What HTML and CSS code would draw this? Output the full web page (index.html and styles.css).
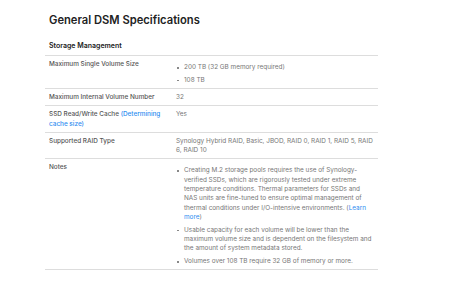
FILE: index.html
```html
<!DOCTYPE html>
<html lang="en">
<head>
  <meta charset="UTF-8" />
  <meta name="viewport" content="width=device-width, initial-scale=1.0" />
  <title>General DSM Specifications</title>
  <link rel="stylesheet" href="styles.css">
</head>
<body>

  <div class="specs">
    <h1>General DSM Specifications</h1>

    <h2>Storage Management</h2>

    <div class="row">
      <div class="label">Maximum Single Volume Size</div>
      <div class="value">
        <ul>
          <li>200 TB (32 GB memory required)</li>
          <li>108 TB</li>
        </ul>
      </div>
    </div>

    <div class="row">
      <div class="label">Maximum Internal Volume Number</div>
      <div class="value">32</div>
    </div>

    <div class="row">
      <div class="label">SSD Read/Write Cache <a href="#">(Determining cache size)</a></div>
      <div class="value">Yes</div>
    </div>

    <div class="row">
      <div class="label">Supported RAID Type</div>
      <div class="value raid">Synology Hybrid RAID, Basic, JBOD, RAID 0, RAID 1, RAID 5, RAID 6, RAID 10</div>
    </div>

    <div class="row">
      <div class="label">Notes</div>
      <div class="value">
        <ul>
          <li>Creating M.2 storage pools requires the use of Synology-verified SSDs, which are rigorously tested under extreme temperature conditions. Thermal parameters for SSDs and NAS units are fine-tuned to ensure optimal management of thermal conditions under I/O-intensive environments. (<a href="#">Learn more</a>)</li>
          <li>Usable capacity for each volume will be lower than the maximum volume size and is dependent on the filesystem and the amount of system metadata stored.</li>
          <li>Volumes over 108 TB require 32 GB of memory or more.</li>
        </ul>
      </div>
    </div>
  </div>

</body>
</html>
```

FILE: styles.css
```css
* {
  margin: 0;
  padding: 0;
  box-sizing: border-box;
}

body {
  background: #fff;
  font-family: 'Inter', 'Noto Sans', sans-serif;
  color: #333;
}

.specs {
  width: 333px;
  margin-left: 45px;
  padding-top: 12px;
}

h1 {
  font-size: 11.2px;
  font-weight: 600;
  color: #222;
  line-height: 16px;
  padding-left: 4px;
}

h2 {
  font-size: 7px;
  font-weight: 600;
  color: #222;
  line-height: 10px;
  margin-top: 13px;
  padding: 0 4px 4px;
  border-bottom: 1px solid #ddd;
}

.row {
  display: flex;
  border-bottom: 1px solid #ddd;
  padding: 4px 0 3px;
  font-size: 6.4px;
  line-height: 9.3px;
}

.label {
  width: 131px;
  flex-shrink: 0;
  padding-left: 4px;
  padding-right: 8px;
  font-weight: 500;
  color: #555;
}

.value {
  flex: 1;
  color: #777;
  padding-right: 4px;
}

.raid {
  padding-right: 1px;
}

a {
  color: #2d8cf0;
  text-decoration: none;
}

ul {
  list-style: none;
  margin-top: 3px;
}

li {
  position: relative;
  padding-left: 8px;
}

li + li {
  margin-top: 3.4px;
}

li::before {
  content: "";
  position: absolute;
  left: 1px;
  top: 4px;
  width: 1.6px;
  height: 1.6px;
  background: #888;
}
```
